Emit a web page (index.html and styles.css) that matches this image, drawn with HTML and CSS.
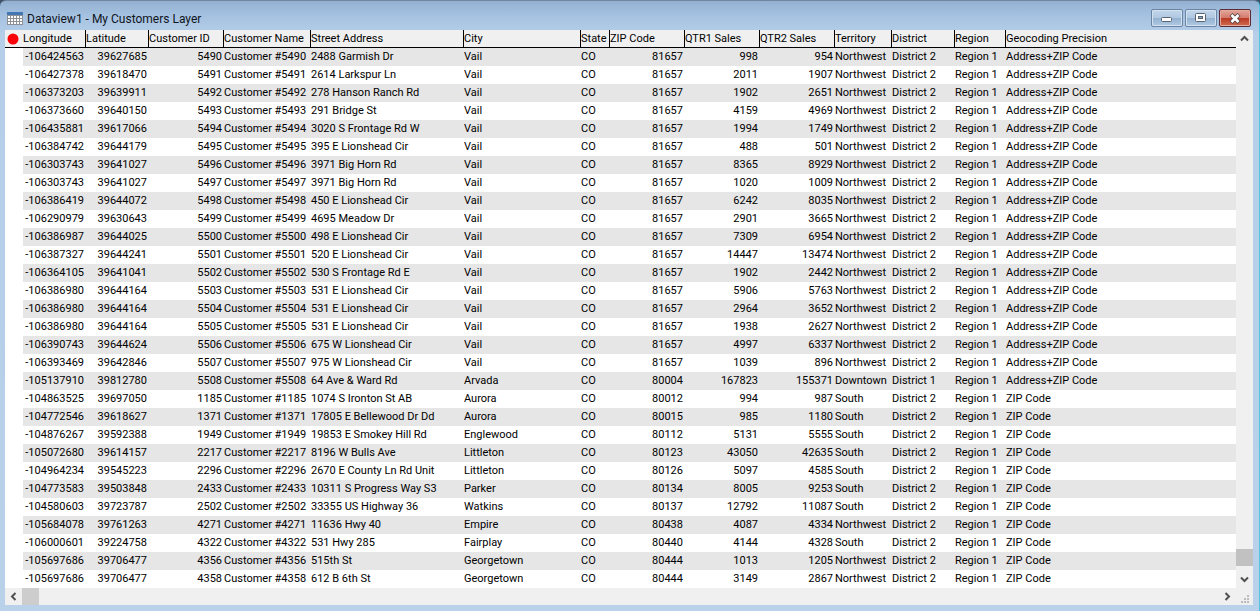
FILE: index.html
```
<!DOCTYPE html>
<html lang="en">
<head>
<meta charset="utf-8">
<title>Dataview1 - My Customers Layer</title>
<link rel="stylesheet" href="styles.css">
</head>
<body>
<main class="window">
  <header class="titlebar">
    <svg class="app-icon" width="16" height="13" viewBox="0 0 16 13" aria-hidden="true" shape-rendering="crispEdges">
      <rect width="16" height="13" fill="#8d9095"/>
      <rect width="16" height="3" fill="#4377b4"/>
      <g fill="#fff">
        <path d="M1 4h2v2H1zM4 4h2v2H4zM7 4h2v2H7zM10 4h2v2h-2zM13 4h2v2h-2zM1 7h2v2H1zM4 7h2v2H4zM7 7h2v2H7zM10 7h2v2h-2zM13 7h2v2h-2zM1 10h2v2H1zM4 10h2v2H4zM7 10h2v2H7zM10 10h2v2h-2zM13 10h2v2h-2z"/>
      </g>
    </svg>
    <h1 class="title">Dataview1 - My Customers Layer</h1>
    <div class="controls">
      <button class="control" aria-label="Minimize"><svg class="low" width="12" height="6" viewBox="0 0 12 6"><rect x=".5" y=".5" width="10" height="4" rx="1" fill="#fff" stroke="#596473"/></svg></button>
      <button class="control" aria-label="Maximize"><svg width="12" height="10" viewBox="0 0 12 10"><rect x=".5" y=".5" width="10" height="8" rx="1" fill="#fff" stroke="#596473"/><rect x="3.500" y="3.500" width="4" height="2" fill="#8ea6c0" stroke="#596473"/></svg></button>
      <button class="control close" aria-label="Close"><svg width="14" height="11" viewBox="0 0 14 11"><path d="M3 1.500l8 8M11 1.500l-8 8" stroke="#5e4a50" stroke-width="4.500"/><path d="M3.500 2l7 7M10.500 2l-7 7" stroke="#fff" stroke-width="2.600"/></svg></button>
    </div>
  </header>
  <section class="client">
    <div class="view">
      <table class="grid">
        <colgroup>
          <col class="w-mark"><col class="w-lon"><col class="w-lat"><col class="w-num"><col class="w-name"><col class="w-street"><col class="w-city"><col class="w-state"><col class="w-num"><col class="w-num"><col class="w-num"><col class="w-terr"><col class="w-lat"><col class="w-region"><col>
        </colgroup>
        <thead>
          <tr><th><svg class="mark" width="12" height="12" viewBox="0 0 12 12" role="img" aria-label="Layer marker"><circle cx="6" cy="6" r="5.500" fill="#fa0008"/></svg></th><th class="first">Longitude</th><th>Latitude</th><th>Customer ID</th><th>Customer Name</th><th>Street Address</th><th>City</th><th>State</th><th>ZIP Code</th><th>QTR1 Sales</th><th>QTR2 Sales</th><th>Territory</th><th>District</th><th>Region</th><th>Geocoding Precision</th></tr>
        </thead>
        <tbody id="rows"></tbody>
      </table>
      <div class="vscroll">
        <button class="arrow" aria-label="Scroll up"><svg width="9" height="7" viewBox="0 0 9 7"><path d="M1 5.500l3.500-3.500L8 5.500" fill="none" stroke="#505050" stroke-width="2"/></svg></button>
        <div class="vthumb"></div>
        <button class="arrow" aria-label="Scroll down"><svg width="9" height="7" viewBox="0 0 9 7"><path d="M1 1.500l3.500 3.500L8 1.500" fill="none" stroke="#505050" stroke-width="2"/></svg></button>
      </div>
    </div>
    <div class="hscroll">
      <button class="arrow" aria-label="Scroll left"><svg width="7" height="9" viewBox="0 0 7 9"><path d="M5.500 1L2 4.500 5.500 8" fill="none" stroke="#505050" stroke-width="2"/></svg></button>
      <div class="hthumb"></div>
      <button class="arrow right" aria-label="Scroll right"><svg width="7" height="9" viewBox="0 0 7 9"><path d="M1.500 1L5 4.500 1.500 8" fill="none" stroke="#505050" stroke-width="2"/></svg></button>
      <svg class="grip" width="17" height="17" viewBox="0 0 17 17" aria-hidden="true"><path d="M11 7h2v2h-2zM8 10h2v2H8zM11 10h2v2h-2zM5 13h2v2H5zM8 13h2v2H8zM11 13h2v2h-2z" fill="#bcbcbc"/></svg>
    </div>
  </section>
</main>
<script src="rows.js"></script>
</body>
</html>
```
FILE: styles.css
```
* { box-sizing: border-box; }

body {
  margin: 0;
  background: #3c5068;
  font-family: Roboto, "Noto Sans", sans-serif;
  font-size: 11px;
  color: #000;
}

.window {
  min-height: 100vh;
  padding: 0 6px 6px 5px;
  background: linear-gradient(180deg, #94b0d1 0, #a5c1e0 14px, #b5cfe9 34px, #b9d1e9 100%);
  border-top: 1px solid #7086a0;
  border-right: 1px solid #4fc4e4;
  border-radius: 6px 6px 0 0;
  display: flex;
  flex-direction: column;
}

.titlebar {
  height: 29px;
  padding: 0 2px;
  display: flex;
  align-items: center;
}

.app-icon { margin-top: 6px; }

.title {
  flex: 1;
  margin: 6px 0 0 4px;
  font: 12px/16px Roboto, sans-serif;
  color: #10151c;
}

.controls {
  display: flex;
  gap: 2px;
  margin-top: 5px;
}

.control {
  width: 32px;
  height: 18px;
  padding: 0;
  display: flex;
  align-items: center;
  justify-content: center;
  border: 1px solid #6b84a3;
  border-radius: 2px;
  background: linear-gradient(180deg, #c3d6eb 0, #b0c8e1 48%, #94b1d0 52%, #b1cae4 100%);
  box-shadow: inset 0 0 0 1px #d3e2f1;
}

.low { margin-top: 4px; }

.close {
  border-color: #5c2b36;
  background: linear-gradient(180deg, #e3a79b 0, #d47b6c 48%, #bb3925 52%, #cf6d4e 100%);
  box-shadow: inset 0 0 0 1px #e3aaa0;
}

.client {
  flex: 1;
  display: flex;
  flex-direction: column;
  background: #fff;
}

.view {
  flex: 1;
  display: flex;
  align-items: stretch;
}

.grid {
  flex: 1;
  width: 100%;
  min-width: 0;
  align-self: flex-start;
  table-layout: fixed;
  border-collapse: separate;
  border-spacing: 0;
}

.w-mark { width: 18px; }
.w-lon { width: 62px; }
.w-lat { width: 63px; }
.w-num { width: 75px; }
.w-name { width: 87px; }
.w-street { width: 153px; }
.w-city { width: 117px; }
.w-state { width: 29px; }
.w-terr { width: 57px; }
.w-region { width: 51px; }

.grid th,
.grid td {
  height: 18px;
  padding: 0 1px;
  line-height: 17px;
  font-weight: normal;
  text-align: left;
  white-space: nowrap;
}

.grid th {
  padding: 0;
  background: #f0f0f0;
  border-bottom: 1px solid #000;
  border-left: 1px solid #000;
}

.grid th:first-child,
.grid th.first { border-left: 0; }

.grid td { line-height: 18px; }

.grid tbody tr:nth-child(odd) td:not(:first-child) { background: #e6e6e6; }

.grid td.number { text-align: right; }

.mark {
  display: block;
  margin: 0 2px;
}

.arrow {
  padding: 0;
  border: 0;
  background: none;
  width: 17px;
  height: 17px;
  display: flex;
  align-items: center;
  justify-content: center;
}

.vscroll {
  flex: none;
  width: 17px;
  background: #f0f0f0;
  display: flex;
  flex-direction: column;
}

.vthumb {
  height: 17px;
  margin: auto 0 5px;
  background: #c1c1c1;
}

.hscroll {
  height: 17px;
  background: #f0f0f0;
  display: flex;
}

.hthumb {
  width: 17px;
  background: #cdcdcd;
}

.right { margin-left: auto; }
```
FILE: rows.js
```
const data = `-106424563|39627685|5490|2488 Garmish Dr|Vail|81657|998|954|Northwest
-106427378|39618470|5491|2614 Larkspur Ln|Vail|81657|2011|1907|Northwest
-106373203|39639911|5492|278 Hanson Ranch Rd|Vail|81657|1902|2651|Northwest
-106373660|39640150|5493|291 Bridge St|Vail|81657|4159|4969|Northwest
-106435881|39617066|5494|3020 S Frontage Rd W|Vail|81657|1994|1749|Northwest
-106384742|39644179|5495|395 E Lionshead Cir|Vail|81657|488|501|Northwest
-106303743|39641027|5496|3971 Big Horn Rd|Vail|81657|8365|8929|Northwest
-106303743|39641027|5497|3971 Big Horn Rd|Vail|81657|1020|1009|Northwest
-106386419|39644072|5498|450 E Lionshead Cir|Vail|81657|6242|8035|Northwest
-106290979|39630643|5499|4695 Meadow Dr|Vail|81657|2901|3665|Northwest
-106386987|39644025|5500|498 E Lionshead Cir|Vail|81657|7309|6954|Northwest
-106387327|39644241|5501|520 E Lionshead Cir|Vail|81657|14447|13474|Northwest
-106364105|39641041|5502|530 S Frontage Rd E|Vail|81657|1902|2442|Northwest
-106386980|39644164|5503|531 E Lionshead Cir|Vail|81657|5906|5763|Northwest
-106386980|39644164|5504|531 E Lionshead Cir|Vail|81657|2964|3652|Northwest
-106386980|39644164|5505|531 E Lionshead Cir|Vail|81657|1938|2627|Northwest
-106390743|39644624|5506|675 W Lionshead Cir|Vail|81657|4997|6337|Northwest
-106393469|39642846|5507|975 W Lionshead Cir|Vail|81657|1039|896|Northwest
-105137910|39812780|5508|64 Ave & Ward Rd|Arvada|80004|167823|155371|Downtown
-104863525|39697050|1185|1074 S Ironton St AB|Aurora|80012|994|987|South
-104772546|39618627|1371|17805 E Bellewood Dr Dd|Aurora|80015|985|1180|South
-104876267|39592388|1949|19853 E Smokey Hill Rd|Englewood|80112|5131|5555|South
-105072680|39614157|2217|8196 W Bulls Ave|Littleton|80123|43050|42635|South
-104964234|39545223|2296|2670 E County Ln Rd Unit|Littleton|80126|5097|4585|South
-104773583|39503848|2433|10311 S Progress Way S3|Parker|80134|8005|9253|South
-104580603|39723787|2502|33355 US Highway 36|Watkins|80137|12792|11087|South
-105684078|39761263|4271|11636 Hwy 40|Empire|80438|4087|4334|Northwest
-106000601|39224758|4322|531 Hwy 285|Fairplay|80440|4144|4328|South
-105697686|39706477|4356|515th St|Georgetown|80444|1013|1205|Northwest
-105697686|39706477|4358|612 B 6th St|Georgetown|80444|3149|2867|Northwest`;

const numeric = new Set([1, 2, 3, 8, 9, 10]);
const body = document.getElementById("rows");

data.split("\n").forEach((line, index) => {
  const [lon, lat, id, street, city, zip, q1, q2, territory] = line.split("|");
  const district = territory === "Downtown" ? "District 1" : "District 2";
  const precision = index < 19 ? "Address+ZIP Code" : "ZIP Code";
  const cells = ["", lon, lat, id, `Customer #${id}`, street, city, "CO", zip, q1, q2, territory, district, "Region 1", precision];
  const row = body.insertRow();
  cells.forEach((text, column) => {
    const cell = row.insertCell();
    cell.textContent = text;
    if (numeric.has(column)) cell.className = "number";
  });
});
```
